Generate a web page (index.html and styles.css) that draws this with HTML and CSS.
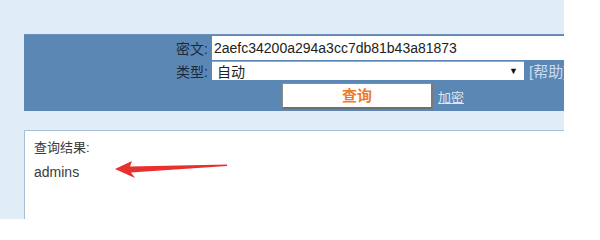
FILE: index.html
```html
<!DOCTYPE html>
<html lang="zh">
<head>
<meta charset="utf-8">
<title>MD5 查询</title>
<link rel="stylesheet" href="styles.css">
</head>
<body>
<div class="page">
  <form class="panel">
    <div class="row row-cipher">
      <label class="label">密文:</label>
      <div class="input">2aefc34200a294a3cc7db81b43a81873</div>
    </div>
    <div class="row row-type">
      <label class="label">类型:</label>
      <div class="select"><span>自动</span><span class="caret">▼</span></div>
      <a class="help">[帮助]</a>
    </div>
    <div class="row row-btn">
      <div class="button">查询</div>
      <a class="encrypt">加密</a>
    </div>
  </form>
  <div class="result">
    <div class="line">查询结果:</div>
    <div class="line latin">admins</div>
    <svg class="arrow" width="120" height="24" viewBox="0 0 120 24">
      <polygon points="0,9 17,1 15,6.5 112,4.5 112,6 16,12.5 20,18" fill="#e8302d"/>
    </svg>
  </div>
</div>
</body>
</html>
```

FILE: styles.css
```css
html, body {
  margin: 0;
  padding: 0;
  background: #ffffff;
  height: 219px;
  overflow: hidden;
}
.page {
  width: 540px;
  height: 185px;
  padding: 34px 0 0 24px;
  background: #e1edf6;
  overflow: hidden;
  font-family: "Liberation Sans", "Noto Sans CJK SC", sans-serif;
}
.panel {
  margin: 0;
  height: 75px;
  padding-top: 1px;
  background: #5b87b5;
  border-top: 1px solid #6e8fbb;
  overflow: hidden;
  display: flex;
  flex-direction: column;
}
.row {
  display: flex;
  align-items: center;
}
.label {
  width: 184px;
  padding-right: 4px;
  text-align: right;
  font-size: 14px;
  color: #1c2a3a;
  flex-shrink: 0;
}
.row-cipher {
  height: 24px;
}
.input {
  flex: 1;
  height: 24px;
  line-height: 24px;
  background: #ffffff;
  padding-left: 2px;
  font-size: 14px;
  color: #222;
  white-space: nowrap;
}
.row-type {
  height: 19px;
  margin-top: 1px;
}
.select {
  width: 312px;
  flex-shrink: 0;
  height: 19px;
  background: #ffffff;
  border-top: 1px solid #9aa8b8;
  box-sizing: border-box;
  display: flex;
  align-items: center;
  justify-content: space-between;
  padding: 0 6px 0 5px;
  font-size: 14px;
  color: #222;
}
.caret {
  font-size: 9px;
  color: #111;
}
.help {
  margin-left: 5px;
  font-size: 15px;
  color: #c9dcf0;
  white-space: nowrap;
}
.row-btn {
  margin-top: 3px;
  padding-left: 258px;
  height: 26px;
}
.button {
  width: 151px;
  height: 26px;
  box-sizing: border-box;
  background: #ffffff;
  border: 1px solid #8d8d8d;
  border-bottom: 2px solid #6f6f6f;
  border-right: 2px solid #7a7a7a;
  text-align: center;
  line-height: 23px;
  font-size: 15px;
  font-weight: bold;
  color: #f07a2a;
}
.encrypt {
  margin-left: 5px;
  font-size: 13px;
  color: #dbe6f4;
  text-decoration: underline;
}
.result {
  position: relative;
  margin-top: 19px;
  height: 140px;
  background: #ffffff;
  border: 1px solid #a7bfd7;
  border-right: none;
  padding: 5px 0 0 9px;
}
.line {
  font-size: 13px;
  line-height: 24px;
  color: #3a3a3a;
}
.latin {
  font-size: 14px;
}
.arrow {
  position: absolute;
  left: 90px;
  top: 29px;
}
```
